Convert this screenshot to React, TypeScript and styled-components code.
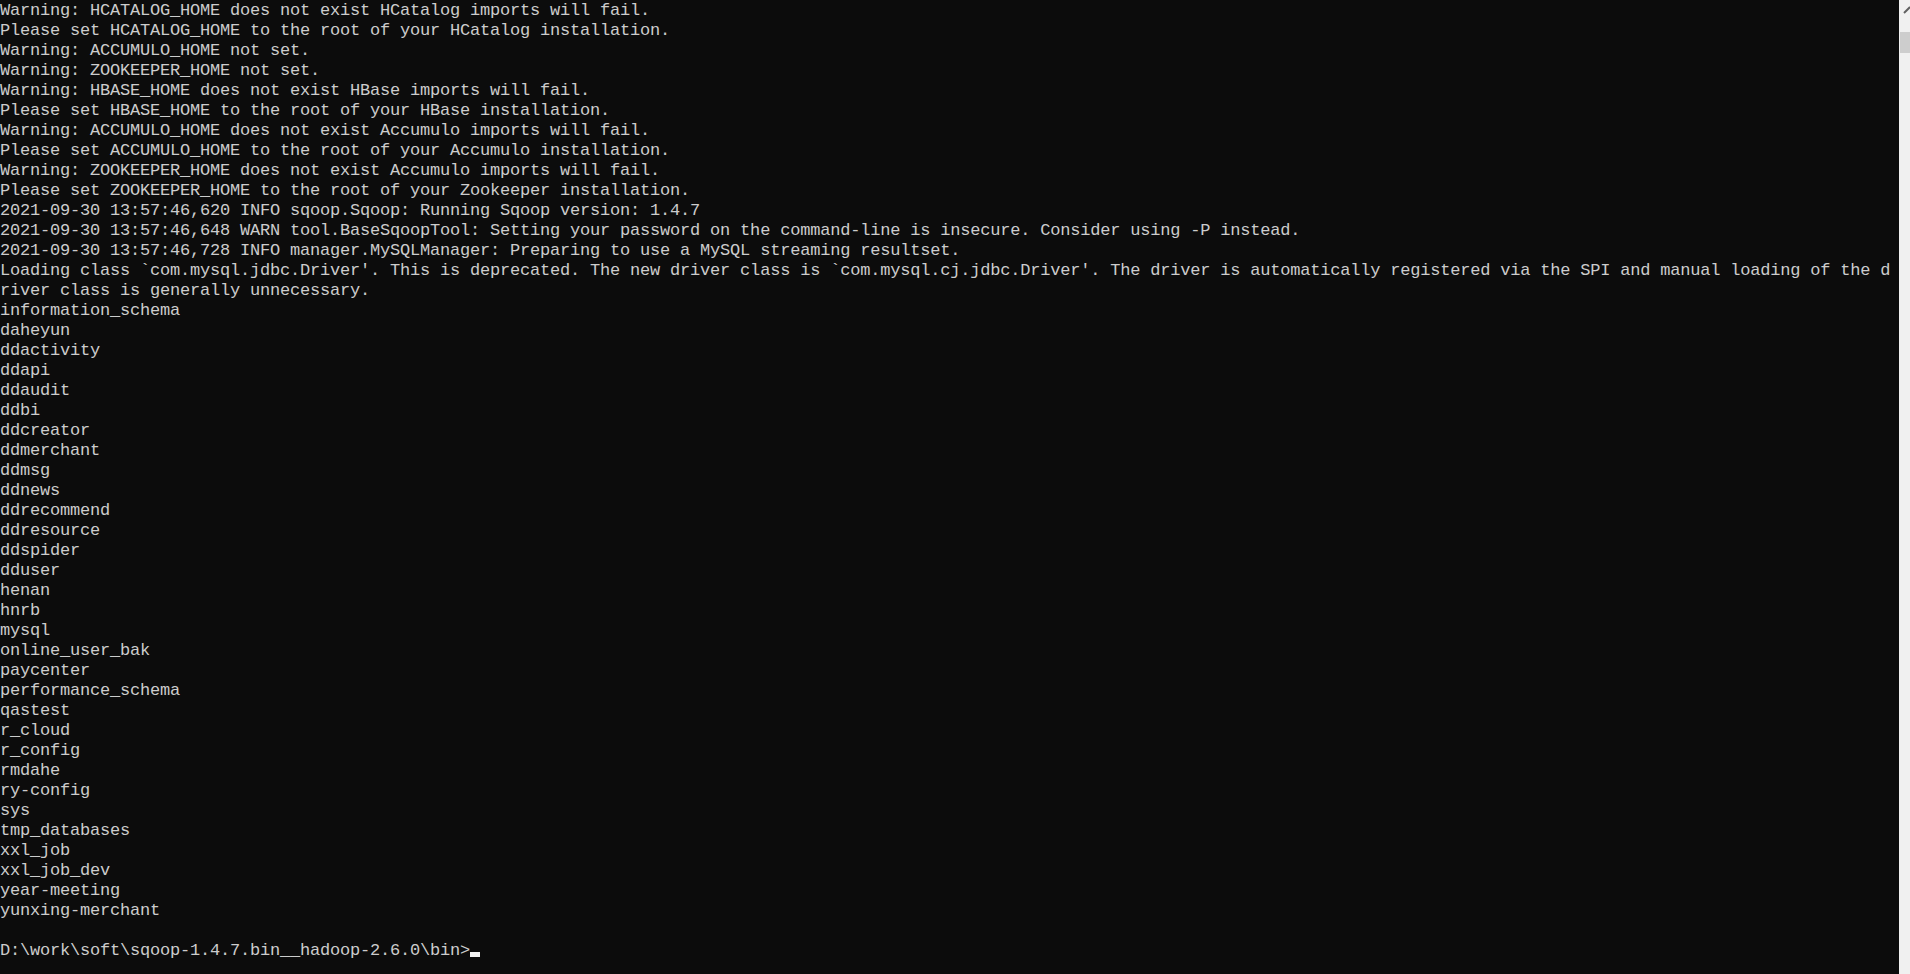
import React from "react";
import styled, { createGlobalStyle } from "styled-components";

const Global = createGlobalStyle`
  html, body { margin: 0; padding: 0; background: #0c0c0c; overflow: hidden; }
  #root { height: 974px; }
`;

const Window = styled.div`
  display: flex;
  width: 1910px;
  height: 974px;
  background: #0c0c0c;
  overflow: hidden;
`;

const Console = styled.div`
  flex: 1;
  display: flex;
  flex-direction: column;
  padding-top: 1px;
  color: #cccccc;
  font-family: "Liberation Mono", "DejaVu Sans Mono", monospace;
  font-size: 17px;
  line-height: 20px;
  letter-spacing: -0.2px;
  white-space: pre;
  overflow: hidden;
`;

const Line = styled.div`
  height: 20px;
  flex-shrink: 0;
`;

const Cursor = styled.span`
  display: inline-block;
  width: 10px;
  height: 5px;
  background: #f2f2f2;
  vertical-align: -2px;
`;

const ScrollBar = styled.div`
  width: 11px;
  background: #f0f0f0;
  display: flex;
  flex-direction: column;
`;

const Arrow = styled.div`
  height: 32px;
  display: flex;
  align-items: flex-start;
  padding-top: 5px;
  box-sizing: border-box;
`;

const Thumb = styled.div`
  margin-left: 1px;
  width: 10px;
  height: 21px;
  background: #cdcdcd;
`;

const lines = [
  "Warning: HCATALOG_HOME does not exist HCatalog imports will fail.",
  "Please set HCATALOG_HOME to the root of your HCatalog installation.",
  "Warning: ACCUMULO_HOME not set.",
  "Warning: ZOOKEEPER_HOME not set.",
  "Warning: HBASE_HOME does not exist HBase imports will fail.",
  "Please set HBASE_HOME to the root of your HBase installation.",
  "Warning: ACCUMULO_HOME does not exist Accumulo imports will fail.",
  "Please set ACCUMULO_HOME to the root of your Accumulo installation.",
  "Warning: ZOOKEEPER_HOME does not exist Accumulo imports will fail.",
  "Please set ZOOKEEPER_HOME to the root of your Zookeeper installation.",
  "2021-09-30 13:57:46,620 INFO sqoop.Sqoop: Running Sqoop version: 1.4.7",
  "2021-09-30 13:57:46,648 WARN tool.BaseSqoopTool: Setting your password on the command-line is insecure. Consider using -P instead.",
  "2021-09-30 13:57:46,728 INFO manager.MySQLManager: Preparing to use a MySQL streaming resultset.",
  "Loading class `com.mysql.jdbc.Driver'. This is deprecated. The new driver class is `com.mysql.cj.jdbc.Driver'. The driver is automatically registered via the SPI and manual loading of the d",
  "river class is generally unnecessary.",
  "information_schema",
  "daheyun",
  "ddactivity",
  "ddapi",
  "ddaudit",
  "ddbi",
  "ddcreator",
  "ddmerchant",
  "ddmsg",
  "ddnews",
  "ddrecommend",
  "ddresource",
  "ddspider",
  "dduser",
  "henan",
  "hnrb",
  "mysql",
  "online_user_bak",
  "paycenter",
  "performance_schema",
  "qastest",
  "r_cloud",
  "r_config",
  "rmdahe",
  "ry-config",
  "sys",
  "tmp_databases",
  "xxl_job",
  "xxl_job_dev",
  "year-meeting",
  "yunxing-merchant",
  "",
];

export default function App() {
  return (
    <>
      <Global />
      <Window>
        <Console>
          {lines.map((l, i) => (
            <Line key={i}>{l}</Line>
          ))}
          <Line>
            {"D:\\work\\soft\\sqoop-1.4.7.bin__hadoop-2.6.0\\bin>"}
            <Cursor />
          </Line>
        </Console>
        <ScrollBar>
          <Arrow>
            <svg width="11" height="9" viewBox="0 0 11 9">
              <path d="M5 8 L11 2" stroke="#606060" strokeWidth="2" fill="none" />
            </svg>
          </Arrow>
          <Thumb />
        </ScrollBar>
      </Window>
    </>
  );
}
